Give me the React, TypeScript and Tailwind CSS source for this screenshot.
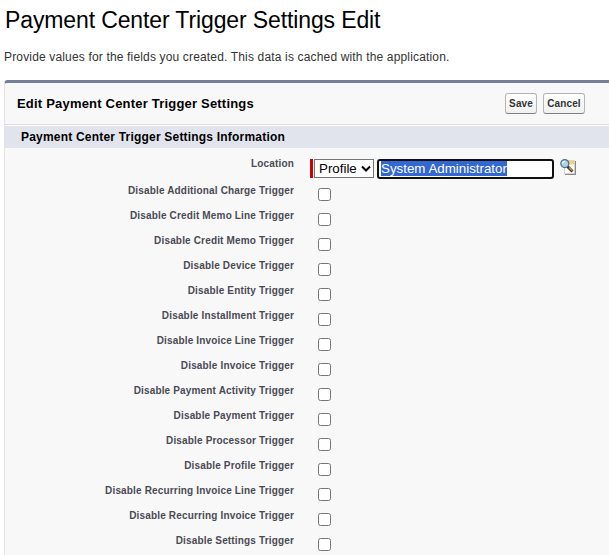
const TRIGGERS = [
  'Disable Additional Charge Trigger',
  'Disable Credit Memo Line Trigger',
  'Disable Credit Memo Trigger',
  'Disable Device Trigger',
  'Disable Entity Trigger',
  'Disable Installment Trigger',
  'Disable Invoice Line Trigger',
  'Disable Invoice Trigger',
  'Disable Payment Activity Trigger',
  'Disable Payment Trigger',
  'Disable Processor Trigger',
  'Disable Profile Trigger',
  'Disable Recurring Invoice Line Trigger',
  'Disable Recurring Invoice Trigger',
  'Disable Settings Trigger',
];

const LookupIcon = () => (
  <svg className="w-4 h-4" viewBox="0 0 16 16" fill="none">
    <path d="M5 2h11v14H5z" fill="#8a8a84" />
    <path d="M4.5 1.5h10v13h-10z" fill="#fff" stroke="#d5d3cc" />
    <path d="M8 2h6v3.5H8z" fill="#ffd073" />
    <path d="M7.3 7.3l5.2 5.2" stroke="#3f3424" strokeWidth="3" />
    <path d="M9 8.5l3.2 3.2" stroke="#d9a04c" strokeWidth="1.1" />
    <circle cx="4.8" cy="4.6" r="4" fill="#a5d5ee" stroke="#4f6f88" strokeWidth="1.2" />
    <path d="M2.5 4.3a2.6 2.6 0 0 1 2.4-2" stroke="#fff" strokeWidth="1.2" />
  </svg>
);

interface ActionButtonProps {
  label: string;
  className: string;
}

const ActionButton = ({ label, className }: ActionButtonProps) => (
  <button
    type="button"
    className={`h-[21px] rounded-[3px] border border-[#b5b5b5] border-b-[#7f7f7f] bg-linear-to-b from-white to-[#f0f0f0] text-[10px] leading-[19px] font-bold tracking-[0.1px] text-[#333] ${className}`}
  >
    {label}
  </button>
);

const TriggerRow = ({ label }: { label: string }) => (
  <label className="flex h-[25px] items-start">
    <span className="w-[289px] pt-[1px] text-right text-[10px] leading-3 font-bold tracking-[0.16px] whitespace-nowrap text-[#4a4a56]">
      {label}
    </span>
    <input
      type="checkbox"
      className="mt-1 ml-6 h-[13px] w-[13px] appearance-none rounded-[2.5px] border border-[#767676] bg-white"
    />
  </label>
);

export default function App() {
  return (
    <div className="h-[555px] w-[609px] overflow-hidden bg-white font-['Liberation_Sans',Arial,sans-serif] text-black">
      <h1 className="h-10 pl-[5px] pt-[6px] text-[23px] leading-7 tracking-[-0.12px] whitespace-nowrap">
        Payment Center Trigger Settings Edit
      </h1>
      <p className="h-10 pl-1 pt-[10px] text-[12px] leading-[14px] tracking-[0.16px] whitespace-nowrap text-[#333]">
        Provide values for the fields you created. This data is cached with the application.
      </p>

      <div className="ml-1 h-[475px] rounded-tl-[4px] border-t-[3px] border-l border-t-[#747e96] border-l-[#e3e3e3] bg-[#f8f8f8]">
        <div className="flex h-[42px] items-center border-b border-[#dbdbdb] pl-3">
          <h2 className="w-[488px] text-[13px] font-bold tracking-[0.2px] whitespace-nowrap">
            Edit Payment Center Trigger Settings
          </h2>
          <ActionButton label="Save" className="w-8" />
          <ActionButton label="Cancel" className="ml-[6px] w-[42px]" />
        </div>
        <div className="border-t border-white">
          <h3 className="h-[22px] bg-[#e2e4ed] pl-4 text-[12px] leading-[22px] font-bold tracking-[0.2px]">
            Payment Center Trigger Settings Information
          </h3>
        </div>

        <div className="pt-[11px]">
          <div className="flex h-[25px] items-start">
            <span className="w-[289px] text-right text-[10px] leading-[10px] font-bold tracking-[0.16px] text-[#4a4a56]">
              Location
            </span>
            <div className="ml-4 h-[19px] w-[3px] bg-[#c00]" />
            <div className="relative ml-[1px] h-[19px] w-[60px]">
              <select className="block h-[19px] w-[60px] appearance-none rounded-none border border-[#767676] bg-white pl-1 text-[13.33px] leading-[17px]">
                <option>Profile</option>
              </select>
              <svg className="pointer-events-none absolute top-[6px] right-[3px] h-2 w-[10px]" viewBox="0 0 10 8" fill="none">
                <path d="M1 1.5l4 4 4-4" stroke="#000" strokeWidth="2" />
              </svg>
            </div>
            <div className="ml-[3px] h-5 w-[177px] rounded-[3px] border-2 border-[#101010] bg-white pl-[2px] text-[13.33px] leading-[15px] whitespace-nowrap">
              <span className="inline-block h-[15px] bg-[#3367d1] text-white">System Administrator</span>
            </div>
            <div className="ml-[6px]">
              <LookupIcon />
            </div>
          </div>
          {TRIGGERS.map((label) => (
            <TriggerRow key={label} label={label} />
          ))}
        </div>
      </div>
    </div>
  );
}
